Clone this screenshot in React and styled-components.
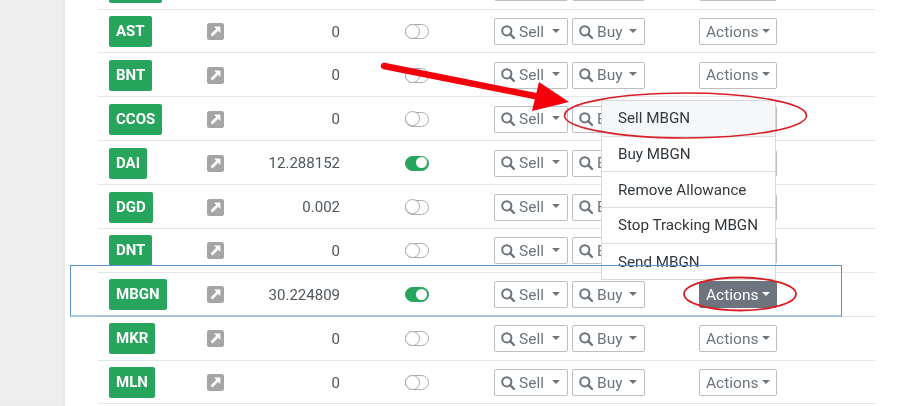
import React from "react";
import styled, { createGlobalStyle } from "styled-components";

const Global = createGlobalStyle`
  html, body { margin: 0; padding: 0; background: #fff; overflow: hidden; }
  body { font-family: Roboto, "Liberation Sans", sans-serif; }
`;

const Page = styled.div`
  position: relative;
  width: 900px;
  height: 406px;
  overflow: hidden;
  display: flex;
  filter: blur(0.4px);
`;
const Sidebar = styled.aside`
  width: 65px;
  flex: none;
  background: #eeeeee;
  box-shadow: inset -4px 0 4px -3px #e4e4e4;
`;
const Main = styled.main`
  flex: 1;
  background: #fff;
  padding-left: 33px;
`;
const Table = styled.div`
  width: 777px;
  margin-top: -34.3px;
`;
const Row = styled.div`
  height: 43.875px;
  box-sizing: border-box;
  border-bottom: 1px solid #e3e6ea;
  padding: 1px 0 0 11px;
  display: grid;
  grid-template-columns: 98px 17px 116px 154px 205px 78px;
  align-items: center;
`;
const Badge = styled.span`
  justify-self: start;
  height: 31px;
  line-height: 31px;
  padding: 0 7px;
  background: #28a55c;
  color: #fff;
  border-radius: 2px;
  font-size: 15px;
  font-weight: 700;
`;
const Amount = styled.span`
  text-align: right;
  font-size: 15px;
  color: #4f565c;
`;
const ToggleCell = styled.div`
  padding-left: 65px;
  display: flex;
`;
const Toggle = styled.span`
  position: relative;
  width: 24px;
  height: 15px;
  box-sizing: border-box;
  border-radius: 7.5px;
  border: 1.4px solid ${(p) => (p.$on ? "#28a55c" : "#aaa")};
  background: ${(p) => (p.$on ? "#28a55c" : "#fff")};
  &::after {
    content: "";
    position: absolute;
    top: ${(p) => (p.$on ? "0.8px" : "-1.4px")};
    left: ${(p) => (p.$on ? "10px" : "-1.4px")};
    width: ${(p) => (p.$on ? "11px" : "15px")};
    height: ${(p) => (p.$on ? "11px" : "15px")};
    box-sizing: border-box;
    border-radius: 50%;
    background: #fff;
    border: ${(p) => (p.$on ? "none" : "1.4px solid #aaa")};
  }
`;
const Group = styled.div`
  display: flex;
  gap: 4px;
`;
const Button = styled.div`
  width: ${(p) => p.$w}px;
  height: 27px;
  box-sizing: border-box;
  display: flex;
  align-items: center;
  gap: 4px;
  padding: 0 7px 0 6px;
  border: 1.4px solid ${(p) => (p.$active ? "#6c757d" : "#bcbfc2")};
  border-radius: 2px;
  background: ${(p) => (p.$active ? "#6c757d" : "#fff")};
  color: ${(p) => (p.$active ? "#fff" : "#6c757d")};
  font-size: 15.5px;
`;
const Caret = styled.i`
  margin-left: auto;
  margin-top: -2px;
  border-left: 4px solid transparent;
  border-right: 4px solid transparent;
  border-top: 4.5px solid currentColor;
`;
const Menu = styled.div`
  position: absolute;
  left: 601px;
  top: 100px;
  width: 175px;
  height: 180px;
  box-sizing: border-box;
  background: #fff;
  border: 1px solid #d6d8da;
  border-bottom: 2px solid #d6d8da;
  display: flex;
  flex-direction: column;
`;
const MenuItem = styled.div`
  height: 35.7px;
  flex: none;
  box-sizing: border-box;
  padding-left: 16px;
  display: flex;
  align-items: center;
  font-size: 15.2px;
  color: #33383c;
  background: ${(p) => (p.$hover ? "#f6f7f9" : "#fff")};
  border-bottom: ${(p) => (p.$last ? "none" : "1px solid #dcdfe2")};
`;
const Overlay = styled.svg`
  position: absolute;
  left: 0;
  top: 0;
  pointer-events: none;
`;

const LinkIcon = () => (
  <svg width="17" height="17" viewBox="0 0 17 17">
    <rect width="17" height="17" rx="2.5" fill="#a5a5a5" />
    <path d="M4.5 12.5 L11 6" stroke="#fff" strokeWidth="2.6" fill="none" />
    <path d="M7 3.6 H13.4 V10 Z" fill="#fff" />
  </svg>
);
const SearchIcon = () => (
  <svg width="14" height="14" viewBox="0 0 14 14" style={{ flex: "none" }}>
    <circle cx="5.8" cy="5.8" r="4.6" fill="none" stroke="currentColor" strokeWidth="2" />
    <path d="M9.2 9.2 L13 13" stroke="currentColor" strokeWidth="2.4" strokeLinecap="round" />
  </svg>
);

const rows = [
  ["ANTS", "0", false],
  ["AST", "0", false],
  ["BNT", "0", false],
  ["CCOS", "0", false],
  ["DAI", "12.288152", true],
  ["DGD", "0.002", false],
  ["DNT", "0", false],
  ["MBGN", "30.224809", true],
  ["MKR", "0", false],
  ["MLN", "0", false],
];
const menu = ["Sell MBGN", "Buy MBGN", "Remove Allowance", "Stop Tracking MBGN", "Send MBGN"];

export default function App() {
  return (
    <>
      <Global />
      <Page>
        <Sidebar />
        <Main>
          <Table>
            {rows.map(([name, amount, on]) => (
              <Row key={name}>
                <Badge>{name}</Badge>
                <LinkIcon />
                <Amount>{amount}</Amount>
                <ToggleCell>
                  <Toggle $on={on} />
                </ToggleCell>
                <Group>
                  <Button $w={74}>
                    <SearchIcon />
                    Sell
                    <Caret />
                  </Button>
                  <Button $w={73}>
                    <SearchIcon />
                    Buy
                    <Caret />
                  </Button>
                </Group>
                <Button $w={78} $active={name === "MBGN"}>
                  Actions
                  <Caret />
                </Button>
              </Row>
            ))}
          </Table>
        </Main>
        <Menu>
          {menu.map((m, i) => (
            <MenuItem key={m} $hover={i === 0} $last={i === menu.length - 1}>
              {m}
            </MenuItem>
          ))}
        </Menu>
        <Overlay width="900" height="406" viewBox="0 0 900 406">
          <rect x="70.5" y="265.5" width="771" height="50.5" fill="none" stroke="#5b93cf" strokeWidth="1" />
          <ellipse cx="685.5" cy="115.5" rx="121" ry="22.5" fill="none" stroke="#d81f26" strokeWidth="1.6" />
          <ellipse cx="740" cy="294" rx="56" ry="16.5" fill="none" stroke="#d81f26" strokeWidth="1.8" />
          <path d="M384 66 L545 98" stroke="#f5000a" strokeWidth="6.5" strokeLinecap="round" />
          <path d="M539 82 L532 111 L569 102 Z" fill="#f5000a" />
        </Overlay>
      </Page>
    </>
  );
}
